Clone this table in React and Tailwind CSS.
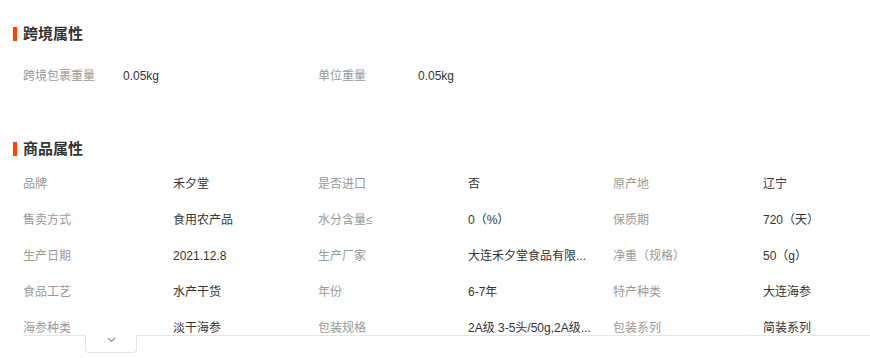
export default function App() {
  const font = { fontFamily: '"Liberation Sans", "Noto Sans CJK SC", sans-serif' };
  const rows = [
    [["品牌", "禾夕堂"], ["是否进口", "否"], ["原产地", "辽宁"]],
    [["售卖方式", "食用农产品"], ["水分含量≤", "0（%）"], ["保质期", "720（天）"]],
    [["生产日期", "2021.12.8"], ["生产厂家", "大连禾夕堂食品有限..."], ["净重（规格）", "50（g）"]],
    [["食品工艺", "水产干货"], ["年份", "6-7年"], ["特产种类", "大连海参"]],
    [["海参种类", "淡干海参"], ["包装规格", "2A级 3-5头/50g,2A级..."], ["包装系列", "简装系列"]],
  ];
  const Title = ({ children }) => (
    <div className="flex items-center h-[20px]">
      <div className="w-[4px] h-[14px] bg-[#ff4400] ml-[13px] mr-[6px]" />
      <div className="text-[15px] font-bold text-[#333]">{children}</div>
    </div>
  );
  return (
    <div className="w-[870px] h-[358px] bg-white overflow-hidden pt-[24px]" style={font}>
      <Title>跨境属性</Title>
      <div className="mt-[14px] ml-[23px] flex h-[36px] items-center text-[12px]">
        <div className="w-[295px] flex">
          <div className="w-[100px] text-[#999]">跨境包裹重量</div>
          <div className="text-[#333]">0.05kg</div>
        </div>
        <div className="w-[295px] flex">
          <div className="w-[100px] text-[#999]">单位重量</div>
          <div className="text-[#333]">0.05kg</div>
        </div>
      </div>
      <div className="mt-[45px]">
        <Title>商品属性</Title>
      </div>
      <div className="mt-[7px] ml-[23px] h-[170px] overflow-hidden border-b border-[#e6e6e6]">
        {rows.map((r, i) => (
          <div key={i} className="flex h-[36px] items-center text-[12px] whitespace-nowrap">
            {r.map(([k, v], j) => (
              <div key={j} className="w-[295px] shrink-0 flex">
                <div className="w-[150px] text-[#999]">{k}</div>
                <div className="text-[#333]">{v}</div>
              </div>
            ))}
          </div>
        ))}
      </div>
      <div className="relative ml-[85px] -mt-px w-[52px] h-[18px] bg-white border border-t-0 border-[#e3e3e3] rounded-b-[4px] flex justify-center">
        <svg width="9" height="6" viewBox="0 0 9 6" className="mt-[2px]">
          <polyline points="1,1 4.5,4.5 8,1" fill="none" stroke="#8a95a8" strokeWidth="1.2" />
        </svg>
      </div>
    </div>
  );
}
